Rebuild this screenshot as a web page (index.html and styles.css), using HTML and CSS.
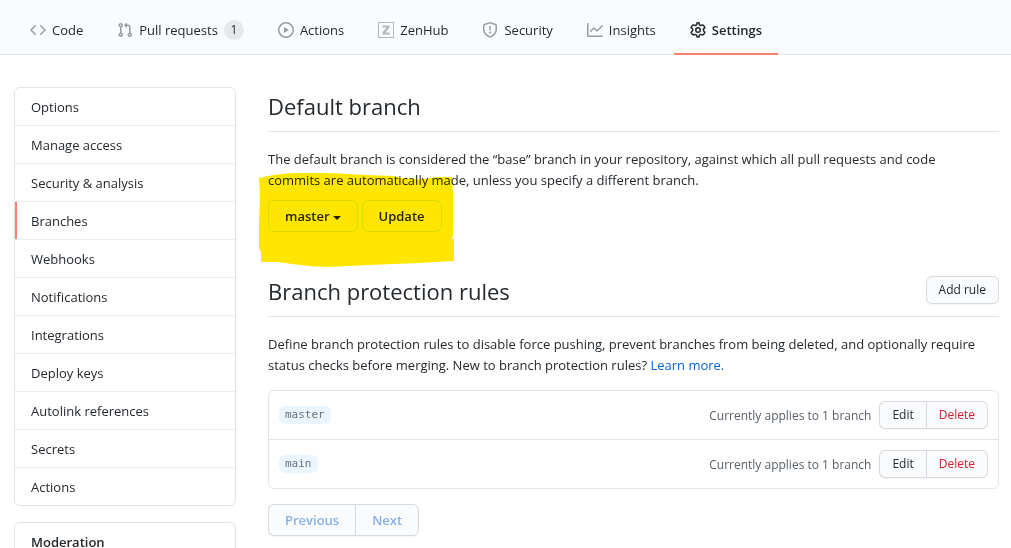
FILE: index.html
```html
<!DOCTYPE html>
<html lang="en">
<head>
<meta charset="utf-8">
<meta name="viewport" content="width=device-width, initial-scale=1">
<title>Branches settings</title>
<link rel="stylesheet" href="styles.css">
</head>
<body>
<nav class="repo-nav" aria-label="Repository">
  <a class="tab" href="#code">
    <svg class="icon" viewBox="0 0 16 16" aria-hidden="true"><path fill-rule="evenodd" d="M4.72 3.22a.75.75 0 011.06 1.06L2.06 8l3.72 3.72a.75.75 0 11-1.06 1.06L.47 8.53a.75.75 0 010-1.06l4.25-4.25zm6.56 0a.75.75 0 10-1.06 1.06L13.94 8l-3.72 3.72a.75.75 0 101.06 1.06l4.25-4.25a.75.75 0 000-1.06l-4.25-4.25z"/></svg>
    <span>Code</span>
  </a>
  <a class="tab" href="#pulls">
    <svg class="icon" viewBox="0 0 16 16" aria-hidden="true"><path fill-rule="evenodd" d="M7.177 3.073L9.573.677A.25.25 0 0110 .854v4.792a.25.25 0 01-.427.177L7.177 3.427a.25.25 0 010-.354zM3.75 2.5a.75.75 0 100 1.5.75.75 0 000-1.5zm-2.25.75a2.25 2.25 0 113 2.122v5.256a2.251 2.251 0 11-1.5 0V5.372A2.25 2.25 0 011.5 3.25zM11 2.5h-1V4h1a1 1 0 011 1v5.628a2.251 2.251 0 101.5 0V5A2.5 2.5 0 0011 2.5zm1 10.25a.75.75 0 111.5 0 .75.75 0 01-1.5 0zM3.75 12a.75.75 0 100 1.5.75.75 0 000-1.5z"/></svg>
    <span>Pull requests</span>
    <span class="counter">1</span>
  </a>
  <a class="tab" href="#actions">
    <svg class="icon" viewBox="0 0 16 16" aria-hidden="true"><path fill-rule="evenodd" d="M1.5 8a6.5 6.5 0 1113 0 6.5 6.5 0 01-13 0zM8 0a8 8 0 100 16A8 8 0 008 0zM6.379 5.227A.25.25 0 006 5.442v5.117a.25.25 0 00.379.214l4.264-2.559a.25.25 0 000-.428L6.379 5.227z"/></svg>
    <span>Actions</span>
  </a>
  <a class="tab" href="#zenhub">
    <svg class="icon icon-zenhub" viewBox="0 0 16 16" aria-hidden="true"><path fill-rule="evenodd" d="M0 0h16v16H0zM1 1v14h14V1zM4.500 3.500h7v2l-4 5h4v2h-7v-2l4-5h-4z"/></svg>
    <span>ZenHub</span>
  </a>
  <a class="tab" href="#security">
    <svg class="icon" viewBox="0 0 16 16" aria-hidden="true"><path fill-rule="evenodd" d="M7.467.133a1.750 1.750 0 011.066 0l5.250 1.680A1.750 1.750 0 0115 3.480V7c0 1.566-.32 3.182-1.303 4.682-.983 1.498-2.585 2.813-5.032 3.855a1.700 1.700 0 01-1.330 0c-2.447-1.042-4.049-2.357-5.032-3.855C1.320 10.182 1 8.566 1 7V3.480a1.750 1.750 0 011.217-1.667l5.250-1.680zm.61 1.429a.25.25 0 00-.153 0l-5.250 1.680a.25.25 0 00-.174.238V7c0 1.358.275 2.666 1.057 3.860.784 1.194 2.121 2.340 4.366 3.297a.2.2 0 00.154 0c2.245-.956 3.582-2.104 4.366-3.298C13.225 9.666 13.500 8.360 13.500 7V3.480a.25.25 0 00-.174-.237l-5.250-1.680zM9 10.500a1 1 0 11-2 0 1 1 0 012 0zm-.25-5.750a.75.75 0 10-1.500 0v3a.75.75 0 001.500 0v-3z"/></svg>
    <span>Security</span>
  </a>
  <a class="tab" href="#insights">
    <svg class="icon" viewBox="0 0 16 16" aria-hidden="true"><path fill-rule="evenodd" d="M1.500 1.750a.75.75 0 00-1.500 0v12.500c0 .414.336.75.75.75h14.500a.75.75 0 000-1.500H1.500V1.750zm14.280 2.530a.75.75 0 00-1.060-1.060L10 7.940 7.530 5.470a.75.75 0 00-1.060 0L3.220 8.720a.75.75 0 001.060 1.060L7 7.060l2.470 2.470a.75.75 0 001.060 0l5.250-5.250z"/></svg>
    <span>Insights</span>
  </a>
  <a class="tab tab-current" href="#settings" aria-current="page">
    <svg class="icon" viewBox="0 0 16 16" aria-hidden="true"><g fill="none" stroke="currentColor" stroke-width="1.500" stroke-linejoin="round"><path d="M7.100.8h1.800l.5 2 1.300.7 2-.6 1.300 1.100.9 1.600-1.500 1.500v1.700l1.500 1.500-.9 1.600-1.300 1.100-2-.6-1.300.7-.5 2H7.100l-.5-2-1.300-.7-2 .6L2 11.900l-.9-1.600 1.500-1.500V7.100L1.100 5.600 2 4l1.300-1.100 2 .6 1.300-.7z"/><circle cx="8" cy="8" r="2.250"/></g></svg>
    <span>Settings</span>
  </a>
</nav>

<div class="page">
  <aside class="sidebar">
    <nav class="menu" aria-label="Settings">
      <a class="menu-item" href="#options">Options</a>
      <a class="menu-item" href="#access">Manage access</a>
      <a class="menu-item" href="#analysis">Security &amp; analysis</a>
      <a class="menu-item menu-item-current" href="#branches" aria-current="page">Branches</a>
      <a class="menu-item" href="#webhooks">Webhooks</a>
      <a class="menu-item" href="#notifications">Notifications</a>
      <a class="menu-item" href="#integrations">Integrations</a>
      <a class="menu-item" href="#keys">Deploy keys</a>
      <a class="menu-item" href="#autolinks">Autolink references</a>
      <a class="menu-item" href="#secrets">Secrets</a>
      <a class="menu-item" href="#actions-settings">Actions</a>
    </nav>
    <nav class="menu" aria-labelledby="moderation">
      <h3 class="menu-item menu-heading" id="moderation">Moderation</h3>
    </nav>
  </aside>

  <main class="content">
    <section class="default-branch">
      <header class="subhead"><h2 class="title">Default branch</h2></header>
      <p class="text">The default branch is considered the “base” branch in your repository, against which all pull requests and code commits are automatically made, unless you specify a different branch.</p>
      <form class="branch-form">
        <button class="btn" type="button" aria-haspopup="menu">master<span class="caret"></span></button>
        <button class="btn" type="button">Update</button>
        <svg class="highlight" viewBox="0 0 195 94" aria-hidden="true"><path d="M0 5Q16 1 34 0H71L108 2 134 3 143 5Q155 7 166 6L178 4H193L194 20V50Q195 61 193 66H195V88L161 90 134 91 111 92Q90 93 71 94 55 94 41 92L18 89H2V79L0 76V47L1 24z"/></svg>
      </form>
    </section>

    <section class="rules">
      <header class="subhead"><h2 class="title">Branch protection rules</h2><button class="btn btn-small" type="button">Add rule</button></header>
      <p class="text">Define branch protection rules to disable force pushing, prevent branches from being deleted, and optionally require status checks before merging. New to branch protection rules? <a class="link" href="#learn">Learn more.</a></p>
      <ul class="rule-list">
        <li class="rule">
          <code class="branch-name">master</code>
          <span class="applies">Currently applies to 1 branch</span>
          <div class="group"><button class="btn btn-small" type="button">Edit</button><button class="btn btn-small btn-danger" type="button">Delete</button></div>
        </li>
        <li class="rule">
          <code class="branch-name">main</code>
          <span class="applies">Currently applies to 1 branch</span>
          <div class="group"><button class="btn btn-small" type="button">Edit</button><button class="btn btn-small btn-danger" type="button">Delete</button></div>
        </li>
      </ul>
      <div class="group pager"><button class="btn" type="button" disabled>Previous</button><button class="btn" type="button" disabled>Next</button></div>
    </section>
  </main>
</div>
</body>
</html>
```

FILE: styles.css
```css
* { box-sizing: border-box; }

body {
  margin: 0;
  background: #fff;
  color: #24292e;
  font-family: "Open Sans", "Noto Sans", sans-serif;
  font-size: 13px;
  line-height: 21px;
}

a { color: inherit; text-decoration: none; }

.repo-nav {
  display: flex;
  gap: 2px;
  height: 55px;
  padding: 0 14px;
  background: #fafbfc;
  border-bottom: 1px solid #e1e4e8;
}
.tab {
  display: flex;
  align-items: center;
  gap: 6px;
  height: 55px;
  padding: 8px 16px 1px;
  border-bottom: 2px solid transparent;
  white-space: nowrap;
}
.tab-current { border-bottom-color: #f9826c; font-weight: 600; }
.icon { flex: none; width: 16px; height: 16px; fill: currentColor; color: #959da5; }
.icon-zenhub { color: #b4b8bc; }
.tab-current .icon { color: #24292e; }
.counter {
  min-width: 20px;
  padding: 0 6px;
  border-radius: 20px;
  background: #e6e8eb;
  font-size: 12px;
  line-height: 20px;
  text-align: center;
}

.page { display: flex; align-items: flex-start; gap: 32px; padding: 32px 12px 0 14px; }

.sidebar { flex: none; width: 222px; }
.menu {
  margin-bottom: 16px;
  border: 1px solid #e1e4e8;
  border-radius: 6px;
  overflow: hidden;
}
.menu-item {
  display: block;
  padding: 9px 16px 7px;
  border-bottom: 1px solid #eaecef;
}
.menu-item:last-child { border-bottom: 0; }
.menu-item-current { box-shadow: inset 2px 0 #f9826c; }
.menu-heading { margin: 0; font-size: 13px; font-weight: 600; }

.content { flex: 1; min-width: 0; }
.subhead {
  display: flex;
  align-items: center;
  justify-content: space-between;
  height: 45px;
  margin-bottom: 17px;
  padding-bottom: 6px;
  border-bottom: 1px solid #e1e4e8;
}
.subhead .btn { margin-bottom: 2px; }
.title { margin: 0; font-size: 22px; line-height: 36px; font-weight: 400; }
.text { max-width: 720px; margin: 0 0 9px; }
.link { color: #0366d6; }

.btn {
  height: 32px;
  padding: 0 16px;
  border: 1px solid #d7d9dc;
  border-radius: 6px;
  background: #fafbfc;
  box-shadow: 0 1px 0 rgba(27, 31, 35, 0.04);
  color: #24292e;
  font-family: inherit;
  font-size: 13px;
  font-weight: 600;
  line-height: 20px;
}
.btn-small { height: 28px; padding: 0 12px; font-size: 12px; font-weight: 500; }
.btn-danger { color: #cb2431; }
.btn:disabled { color: #86b1e9; }
.caret {
  display: inline-block;
  margin-left: 3px;
  border: 4px solid transparent;
  border-top-color: currentColor;
  border-bottom: 0;
  vertical-align: middle;
}

.branch-form { position: relative; display: flex; gap: 4px; margin-bottom: 40px; }
.branch-form .btn { border-color: #d9f5e0; background: #fff; box-shadow: none; }
.highlight {
  position: absolute;
  top: -27px;
  left: -9px;
  width: 195px;
  height: 94px;
  fill: #ffe600;
  mix-blend-mode: multiply;
  pointer-events: none;
}

.group { display: flex; }
.group .btn:first-child { border-radius: 6px 0 0 6px; border-right-width: 0; }
.group .btn:last-child { border-radius: 0 6px 6px 0; }

.rule-list {
  margin: 14px 0 15px;
  padding: 0;
  border: 1px solid #e1e4e8;
  border-radius: 6px;
  list-style: none;
}
.rule { display: flex; align-items: center; gap: 8px; padding: 10px; }
.rule + .rule { border-top: 1px solid #e1e4e8; }
.branch-name {
  padding: 0 6px;
  border-radius: 6px;
  background: #eaf5ff;
  color: #6a737d;
  font-family: "DejaVu Sans Mono", "Liberation Mono", monospace;
  font-size: 11px;
  line-height: 18px;
}
.applies { margin-left: auto; color: #586069; font-size: 12px; }
```
